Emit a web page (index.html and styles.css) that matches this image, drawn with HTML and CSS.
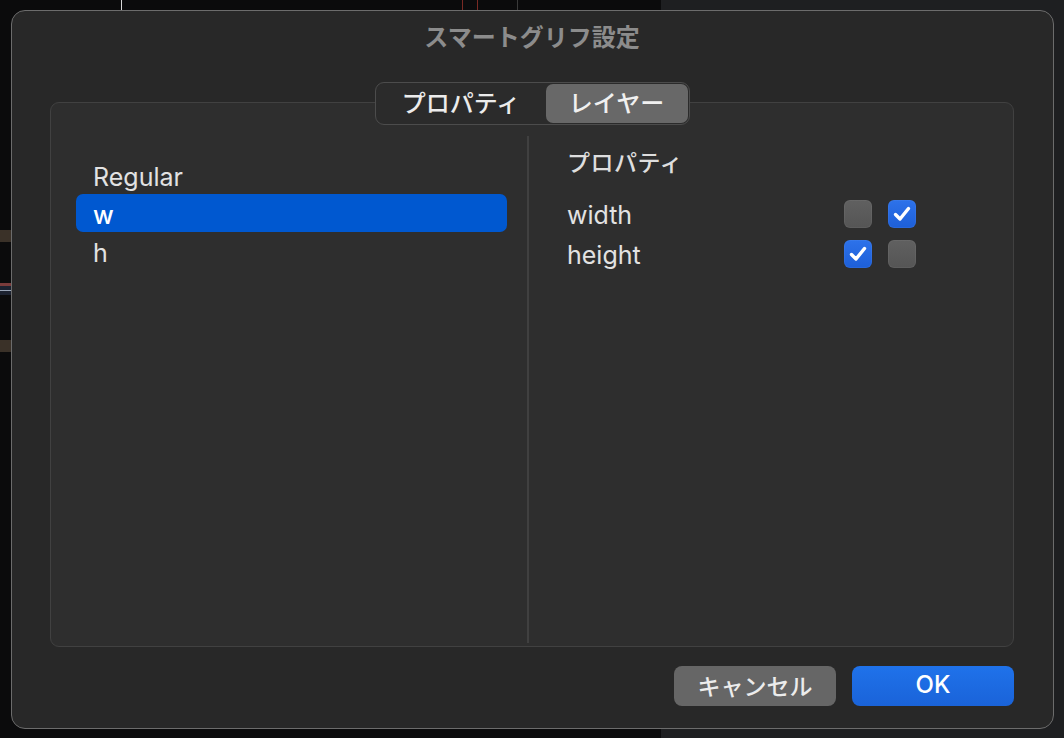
FILE: index.html
```html
<!DOCTYPE html>
<html lang="ja">
<head>
    <meta charset="utf-8">
    <link rel="stylesheet" href="styles.css">
</head>
<body>
    <div class="backdrop">
        <div class="canvas-dark"></div>
        <div class="canvas-side"></div>
        <span class="guide guide-white" style="left: 121px"></span>
        <span class="guide guide-red" style="left: 462px"></span>
        <span class="guide guide-red" style="left: 477px"></span>
        <span class="guide guide-gray" style="left: 517px"></span>
        <span class="swatch swatch-brown" style="top: 230px"></span>
        <span class="swatch swatch-mix" style="top: 283px"></span>
        <span class="swatch swatch-brown" style="top: 340px"></span>
    </div>

    <div class="dialog">
        <h1 class="dialog-title">スマートグリフ設定</h1>

        <div class="tabs">
            <div class="segmented">
                <button class="segment">プロパティ</button>
                <button class="segment active">レイヤー</button>
            </div>
        </div>

        <div class="group">
            <div class="layer-list">
                <div class="layer-row">Regular</div>
                <div class="layer-row selected">w</div>
                <div class="layer-row">h</div>
            </div>

            <div class="divider"></div>

            <div class="prop-panel">
                <div class="prop-header">プロパティ</div>
                <div class="prop-row">
                    <span class="prop-name">width</span>
                    <span class="checks">
                        <span class="check"></span>
                        <span class="check on">
                            <svg viewBox="0 0 28 28"><path d="M7.5 14.5 L12 19 L20.5 8.5"/></svg>
                        </span>
                    </span>
                </div>
                <div class="prop-row">
                    <span class="prop-name">height</span>
                    <span class="checks">
                        <span class="check on">
                            <svg viewBox="0 0 28 28"><path d="M7.5 14.5 L12 19 L20.5 8.5"/></svg>
                        </span>
                        <span class="check"></span>
                    </span>
                </div>
            </div>
        </div>

        <div class="buttons">
            <button class="btn btn-cancel">キャンセル</button>
            <button class="btn btn-ok">OK</button>
        </div>
    </div>
</body>
</html>
```

FILE: styles.css
```css
* {
    box-sizing: border-box;
}

html, body {
    margin: 0;
    height: 738px;
    overflow: hidden;
}

body {
    position: relative;
    background: #0a0a0b;
    font-family: "Inter", "Noto Sans CJK JP", sans-serif;
    color: #e4e4e4;
}

/* window behind the sheet */
.backdrop {
    position: absolute;
    inset: 0;
}

.canvas-dark {
    position: absolute;
    left: 0;
    top: 0;
    width: 661px;
    height: 100%;
    background: #0b0b0c;
}

.canvas-side {
    position: absolute;
    left: 661px;
    top: 0;
    right: 0;
    height: 100%;
    background: #1e1f21;
}

.guide {
    position: absolute;
    top: 0;
    width: 1px;
    height: 12px;
}

.guide-white { background: #d8d8d8; }
.guide-red { background: #7a2a24; }
.guide-gray { background: #3a3a3a; }

.swatch {
    position: absolute;
    left: 0;
    width: 11px;
    height: 12px;
}

.swatch-brown { background: #3a3128; }
.swatch-mix { background: linear-gradient(#7a3b3b 0 25%, #1c2230 25% 60%, #9aa6b8 60% 70%, #1c2230 70%); }

/* sheet */
.dialog {
    position: absolute;
    left: 11px;
    top: 10px;
    width: 1043px;
    height: 719px;
    background: #282828;
    border: 1px solid #6c6c6c;
    border-radius: 14px;
    padding: 0 39px 0 38px;
    display: flex;
    flex-direction: column;
}

.dialog-title {
    margin: 10px 0 0;
    height: 33px;
    line-height: 33px;
    text-align: center;
    font-size: 24px;
    font-weight: 700;
    color: #8c8c8c;
}

.tabs {
    display: flex;
    justify-content: center;
    margin-top: 28px;
    margin-bottom: -23px;
    position: relative;
    z-index: 1;
}

.segmented {
    display: flex;
    width: 315px;
    height: 43px;
    padding: 1px;
    background: #2b2b2b;
    border: 1px solid #4c4c4c;
    border-radius: 9px;
}

.segment {
    flex: 1;
    border: none;
    background: transparent;
    color: #ececec;
    font-family: "Noto Sans CJK JP", sans-serif;
    font-size: 24px;
    font-weight: 500;
    border-radius: 7px;
    padding: 0 0 5px;
}

.segment:first-child {
    flex: 0 0 169px;
}

.segment.active {
    background: #686868;
    color: #f0f0f0;
}

.group {
    display: flex;
    height: 545px;
    background: #2e2e2e;
    border: 1px solid #414141;
    border-radius: 9px;
    padding: 33px 0 3px;
}

.layer-list {
    width: 476px;
    padding: 20px 20px 0 25px;
}

.layer-row {
    height: 38px;
    line-height: 38px;
    padding: 2px 0 0 17px;
    font-size: 25px;
    color: #e2e2e2;
    border-radius: 7px;
}

.layer-row.selected {
    background: #0058d0;
    color: #ffffff;
    font-weight: 500;
}

.divider {
    width: 2px;
    background: #404040;
}

.prop-panel {
    flex: 1;
    padding: 10px 0 0 38px;
}

.prop-header {
    height: 30px;
    line-height: 30px;
    font-size: 23px;
    font-weight: 500;
    letter-spacing: 0.5px;
    color: #dedede;
    font-family: "Noto Sans CJK JP", sans-serif;
    margin-bottom: 24px;
}

.prop-row {
    display: flex;
    align-items: center;
    height: 28px;
    margin-bottom: 12px;
}

.prop-name {
    width: 277px;
    font-size: 25px;
    padding-top: 2px;
    color: #e2e2e2;
}

.checks {
    display: flex;
    gap: 16px;
}

.check {
    width: 28px;
    height: 28px;
    border-radius: 6px;
    background: linear-gradient(#606060, #555555);
    box-shadow: inset 0 0 0 1px rgba(255, 255, 255, 0.05);
}

.check.on {
    background: linear-gradient(#2d72ea, #1d5fd8);
}

.check svg {
    display: block;
    width: 28px;
    height: 28px;
}

.check path {
    fill: none;
    stroke: #ffffff;
    stroke-width: 3.4;
    stroke-linecap: round;
    stroke-linejoin: round;
}

.buttons {
    display: flex;
    justify-content: flex-end;
    gap: 16px;
    margin-top: 19px;
}

.btn {
    width: 162px;
    height: 40px;
    border: none;
    border-radius: 8px;
    font-size: 23px;
    font-weight: 500;
    padding: 0 0 3px;
    font-family: "Inter", "Noto Sans CJK JP", sans-serif;
}

.btn-cancel {
    background: #666666;
    color: #ececec;
}

.btn-ok {
    background: linear-gradient(#1f72ea, #1a63d9);
    color: #ffffff;
    font-size: 24px;
}
```
